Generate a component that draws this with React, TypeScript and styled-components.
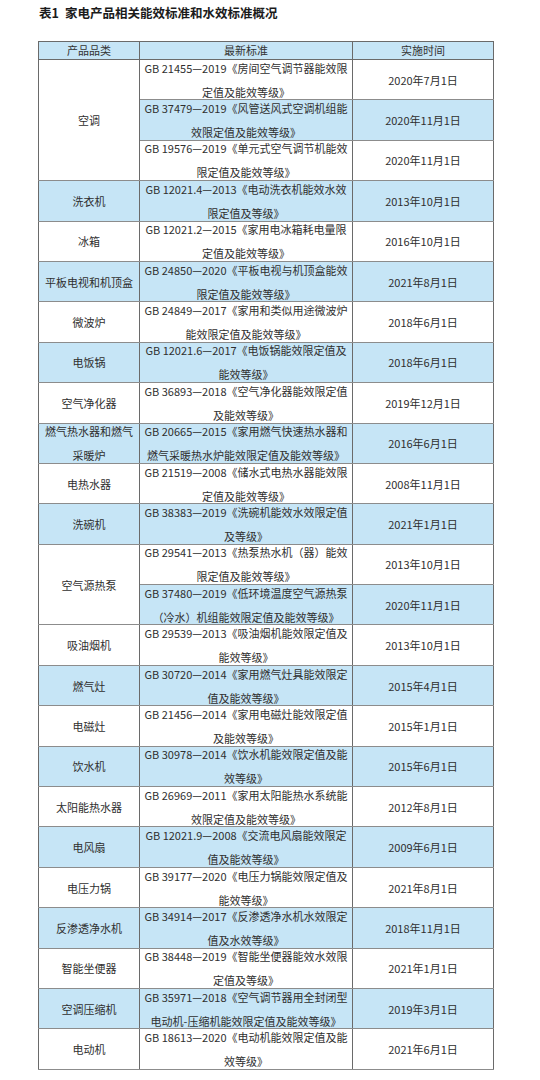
import React from "react";
import styled, { createGlobalStyle } from "styled-components";

const Global = createGlobalStyle`
  html, body { margin: 0; padding: 0; background: #ffffff; }
  body { font-family: "Noto Sans CJK SC", "Noto Sans", sans-serif; color: #2b2b2b; }
`;

const Page = styled.div`
  width: 540px;
  padding: 0 0 0 38px;
  box-sizing: border-box;
`;

const Title = styled.div`
  font-size: 12.5px;
  font-weight: 700;
  line-height: 25px;
  height: 25px;
  color: #1b1b1b;
  margin-left: 1px;
  margin-bottom: 16px;
  white-space: nowrap;
`;

const TitleGap = styled.span`
  display: inline-block;
  width: 6px;
`;

const Table = styled.table`
  border-collapse: collapse;
  width: 455px;
  table-layout: fixed;
  border: 1px solid #6a6a6a;
`;

const Col = styled.col<{ $w: number }>`
  width: ${(p) => p.$w}px;
`;

const HeadCell = styled.th`
  background: #c6e5f6;
  border: 1px solid #6a6a6a;
  font-weight: 400;
  font-size: 11px;
  line-height: 17px;
  height: 17px;
  padding: 0;
  text-align: center;
  color: #333;
`;

const Cell = styled.td<{ $blue?: boolean }>`
  background: ${(p) => (p.$blue ? "#c6e5f6" : "#ffffff")};
  border-left: 1px solid #6a6a6a;
  border-right: 1px solid #6a6a6a;
  border-top: 1px solid #8c8c8c;
  border-bottom: 1px solid #8c8c8c;
  padding: 0;
  font-size: 11px;
  text-align: center;
  vertical-align: middle;
  color: #2f2f2f;
`;

const Lines = styled.div`
  height: 39.4px;
  display: flex;
  flex-direction: column;
  justify-content: center;
  align-items: center;
  line-height: 24px;
  white-space: nowrap;
`;

const Line = styled.span`
  display: block;
`;

type Sub = { a: string; b: string; date: string; blue: boolean };
type Group = { name: string[]; blue: boolean; subs: Sub[] };

const groups: Group[] = [
  {
    name: ["空调"],
    blue: false,
    subs: [
      { a: "GB 21455—2019《房间空气调节器能效限", b: "定值及能效等级》", date: "2020年7月1日", blue: false },
      { a: "GB 37479—2019《风管送风式空调机组能", b: "效限定值及能效等级》", date: "2020年11月1日", blue: true },
      { a: "GB 19576—2019《单元式空气调节机能效", b: "限定值及能效等级》", date: "2020年11月1日", blue: false },
    ],
  },
  { name: ["洗衣机"], blue: true, subs: [{ a: "GB 12021.4—2013《电动洗衣机能效水效", b: "限定值及等级》", date: "2013年10月1日", blue: true }] },
  { name: ["冰箱"], blue: false, subs: [{ a: "GB 12021.2—2015《家用电冰箱耗电量限", b: "定值及能效等级》", date: "2016年10月1日", blue: false }] },
  { name: ["平板电视和机顶盒"], blue: true, subs: [{ a: "GB 24850—2020《平板电视与机顶盒能效", b: "限定值及能效等级》", date: "2021年8月1日", blue: true }] },
  { name: ["微波炉"], blue: false, subs: [{ a: "GB 24849—2017《家用和类似用途微波炉", b: "能效限定值及能效等级》", date: "2018年6月1日", blue: false }] },
  { name: ["电饭锅"], blue: true, subs: [{ a: "GB 12021.6—2017《电饭锅能效限定值及", b: "能效等级》", date: "2018年6月1日", blue: true }] },
  { name: ["空气净化器"], blue: false, subs: [{ a: "GB 36893—2018《空气净化器能效限定值", b: "及能效等级》", date: "2019年12月1日", blue: false }] },
  { name: ["燃气热水器和燃气", "采暖炉"], blue: true, subs: [{ a: "GB 20665—2015《家用燃气快速热水器和", b: "燃气采暖热水炉能效限定值及能效等级》", date: "2016年6月1日", blue: true }] },
  { name: ["电热水器"], blue: false, subs: [{ a: "GB 21519—2008《储水式电热水器能效限", b: "定值及能效等级》", date: "2008年11月1日", blue: false }] },
  { name: ["洗碗机"], blue: true, subs: [{ a: "GB 38383—2019《洗碗机能效水效限定值", b: "及等级》", date: "2021年1月1日", blue: true }] },
  {
    name: ["空气源热泵"],
    blue: false,
    subs: [
      { a: "GB 29541—2013《热泵热水机（器）能效", b: "限定值及能效等级》", date: "2013年10月1日", blue: false },
      { a: "GB 37480—2019《低环境温度空气源热泵", b: "（冷水）机组能效限定值及能效等级》", date: "2020年11月1日", blue: true },
    ],
  },
  { name: ["吸油烟机"], blue: false, subs: [{ a: "GB 29539—2013《吸油烟机能效限定值及", b: "能效等级》", date: "2013年10月1日", blue: false }] },
  { name: ["燃气灶"], blue: true, subs: [{ a: "GB 30720—2014《家用燃气灶具能效限定", b: "值及能效等级》", date: "2015年4月1日", blue: true }] },
  { name: ["电磁灶"], blue: false, subs: [{ a: "GB 21456—2014《家用电磁灶能效限定值", b: "及能效等级》", date: "2015年1月1日", blue: false }] },
  { name: ["饮水机"], blue: true, subs: [{ a: "GB 30978—2014《饮水机能效限定值及能", b: "效等级》", date: "2015年6月1日", blue: true }] },
  { name: ["太阳能热水器"], blue: false, subs: [{ a: "GB 26969—2011《家用太阳能热水系统能", b: "效限定值及能效等级》", date: "2012年8月1日", blue: false }] },
  { name: ["电风扇"], blue: true, subs: [{ a: "GB 12021.9—2008《交流电风扇能效限定", b: "值及能效等级》", date: "2009年6月1日", blue: true }] },
  { name: ["电压力锅"], blue: false, subs: [{ a: "GB 39177—2020《电压力锅能效限定值及", b: "能效等级》", date: "2021年8月1日", blue: false }] },
  { name: ["反渗透净水机"], blue: true, subs: [{ a: "GB 34914—2017《反渗透净水机水效限定", b: "值及水效等级》", date: "2018年11月1日", blue: true }] },
  { name: ["智能坐便器"], blue: false, subs: [{ a: "GB 38448—2019《智能坐便器能效水效限", b: "定值及等级》", date: "2021年1月1日", blue: false }] },
  { name: ["空调压缩机"], blue: true, subs: [{ a: "GB 35971—2018《空气调节器用全封闭型", b: "电动机-压缩机能效限定值及能效等级》", date: "2019年3月1日", blue: true }] },
  { name: ["电动机"], blue: false, subs: [{ a: "GB 18613—2020《电动机能效限定值及能", b: "效等级》", date: "2021年6月1日", blue: false }] },
];

export default function App() {
  return (
    <>
      <Global />
      <Page>
        <Title>
          表1<TitleGap />家电产品相关能效标准和水效标准概况
        </Title>
        <Table>
          <colgroup>
            <Col $w={101} />
            <Col $w={213} />
            <Col $w={141} />
          </colgroup>
          <thead>
            <tr>
              <HeadCell>产品品类</HeadCell>
              <HeadCell>最新标准</HeadCell>
              <HeadCell>实施时间</HeadCell>
            </tr>
          </thead>
          <tbody>
            {groups.map((g, gi) =>
              g.subs.map((s, si) => (
                <tr key={`${gi}-${si}`}>
                  {si === 0 && (
                    <Cell $blue={g.blue} rowSpan={g.subs.length}>
                      <Lines>
                        {g.name.map((n) => (
                          <Line key={n}>{n}</Line>
                        ))}
                      </Lines>
                    </Cell>
                  )}
                  <Cell $blue={s.blue}>
                    <Lines>
                      <Line>{s.a}</Line>
                      <Line>{s.b}</Line>
                    </Lines>
                  </Cell>
                  <Cell $blue={s.blue}>
                    <Lines>{s.date}</Lines>
                  </Cell>
                </tr>
              ))
            )}
          </tbody>
        </Table>
      </Page>
    </>
  );
}
